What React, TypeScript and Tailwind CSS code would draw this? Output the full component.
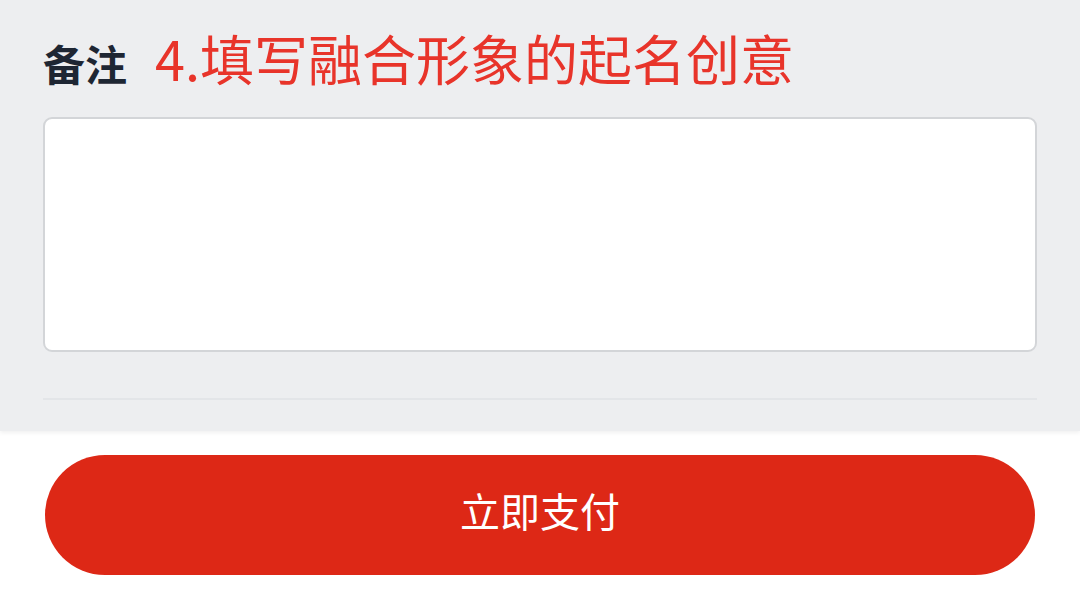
export default function App() {
  return (
    <div
      className="flex h-[598px] w-[1080px] flex-col overflow-hidden bg-white"
      style={{ fontFamily: '"Noto Sans CJK SC", "Noto Sans", sans-serif' }}
    >
      <div className="flex h-[431px] flex-col bg-[#edeef0] px-[43px] pt-[30px] shadow-[0_2px_4px_rgba(0,0,0,0.06)]">
        <div className="flex h-[66px] items-center gap-[28px]">
          <span className="text-[42px] font-bold leading-none text-[#1e2633]">备注</span>
          <span className="mb-[10px] text-[54px] leading-none text-[#e8342a]">4.填写融合形象的起名创意</span>
        </div>
        <textarea className="mt-[21px] h-[235px] w-full resize-none rounded-[9px] border-2 border-[#d3d5d8] bg-white outline-none" />
        <div className="mt-[46px] h-[2px] w-full bg-[#e3e5e8]" />
      </div>
      <div className="flex flex-1 items-start px-[45px] pt-[24px]">
        <button className="flex h-[120px] w-full items-center justify-center rounded-full bg-[#dd2816] pb-[10px] text-[40px] leading-none text-white">
          立即支付
        </button>
      </div>
    </div>
  )
}
